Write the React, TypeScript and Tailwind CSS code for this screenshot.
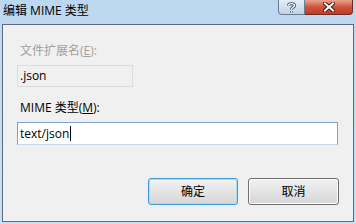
export default function App() {
  const font = { fontFamily: '"Open Sans", "Noto Sans CJK SC", sans-serif' };
  return (
    <div
      className="w-[356px] h-[224px] overflow-hidden flex flex-col bg-gradient-to-b from-[#bcd8f1] to-[#c9e1f5] text-[12px] leading-none"
      style={font}
    >
      {/* title bar */}
      <div className="h-[24px] flex items-start shrink-0">
        <div className="pl-[3px] pt-[5px] text-[12px] text-black">编辑 MIME 类型</div>
        <div className="ml-auto flex mr-[3px]">
          <div className="w-[27px] h-[15px] rounded-bl-[4px] border border-t-0 border-[#6b7d93] bg-gradient-to-b from-[#e4eef8] to-[#c3d3e4] flex items-center justify-center">
            <svg width="9" height="11" viewBox="0 0 9 11">
              <path
                d="M1.5 3.5 C1.5 1 7.5 1 7.5 3.5 C7.5 5.5 4.5 5 4.5 7.5 M4.5 9 L4.5 10.5"
                fill="none"
                stroke="#3a4a5c"
                strokeWidth="3"
              />
              <path
                d="M1.5 3.5 C1.5 1 7.5 1 7.5 3.5 C7.5 5.5 4.5 5 4.5 7.5 M4.5 9 L4.5 10.5"
                fill="none"
                stroke="#fff"
                strokeWidth="1.4"
              />
            </svg>
          </div>
          <div className="w-[48px] h-[15px] rounded-br-[4px] border border-t-0 border-l-0 border-[#6e2a22] bg-gradient-to-b from-[#e8a493] via-[#d0533b] to-[#c23a22] flex items-center justify-center">
            <svg width="12" height="10" viewBox="0 0 12 10">
              <path d="M2 1.5 L10 8.5 M10 1.5 L2 8.5" stroke="#4a1a12" strokeWidth="4" strokeLinecap="square" />
              <path d="M2 1.5 L10 8.5 M10 1.5 L2 8.5" stroke="#fff" strokeWidth="2" strokeLinecap="square" />
            </svg>
          </div>
        </div>
      </div>

      {/* client area */}
      <div className="mx-[2px] mb-[2px] flex-1 border border-[#5f6b7a] bg-[#f0f0f0] flex flex-col px-[14px]">
        <div className="pt-[20px] pl-[3px] text-[#a0a0a0]">
          文件扩展名(<span className="underline">E</span>):
        </div>
        <div className="mt-[8px] w-[116px] h-[22px] border border-[#d9dde2] bg-[#f0f0f0] flex items-center pl-[2px] text-black">
          .json
        </div>
        <div className="mt-[15px] pl-[3px] text-black">
          MIME 类型(<span className="underline">M</span>):
        </div>
        <div className="mt-[8px] w-[321px] h-[23px] border border-[#7da2ce] border-b-[#c4d8ec] bg-white flex items-center pl-[2px] text-black">
          text/json
          <span className="inline-block w-[1px] h-[15px] bg-black ml-[1px]" />
        </div>
        <div className="mt-[33px] flex justify-end gap-[10px] pr-[0px]">
          <div className="w-[90px] h-[27px] rounded-[3px] border border-[#3c9ad6] shadow-[inset_0_0_0_1px_#a6e0f8] bg-gradient-to-b from-[#f2f2f2] to-[#d6d6d6] flex items-center justify-center text-black">
            确定
          </div>
          <div className="w-[91px] h-[27px] rounded-[3px] border border-[#707070] shadow-[inset_0_0_0_1px_#fbfbfb] bg-gradient-to-b from-[#f2f2f2] to-[#d6d6d6] flex items-center justify-center text-black">
            取消
          </div>
        </div>
      </div>
    </div>
  );
}
